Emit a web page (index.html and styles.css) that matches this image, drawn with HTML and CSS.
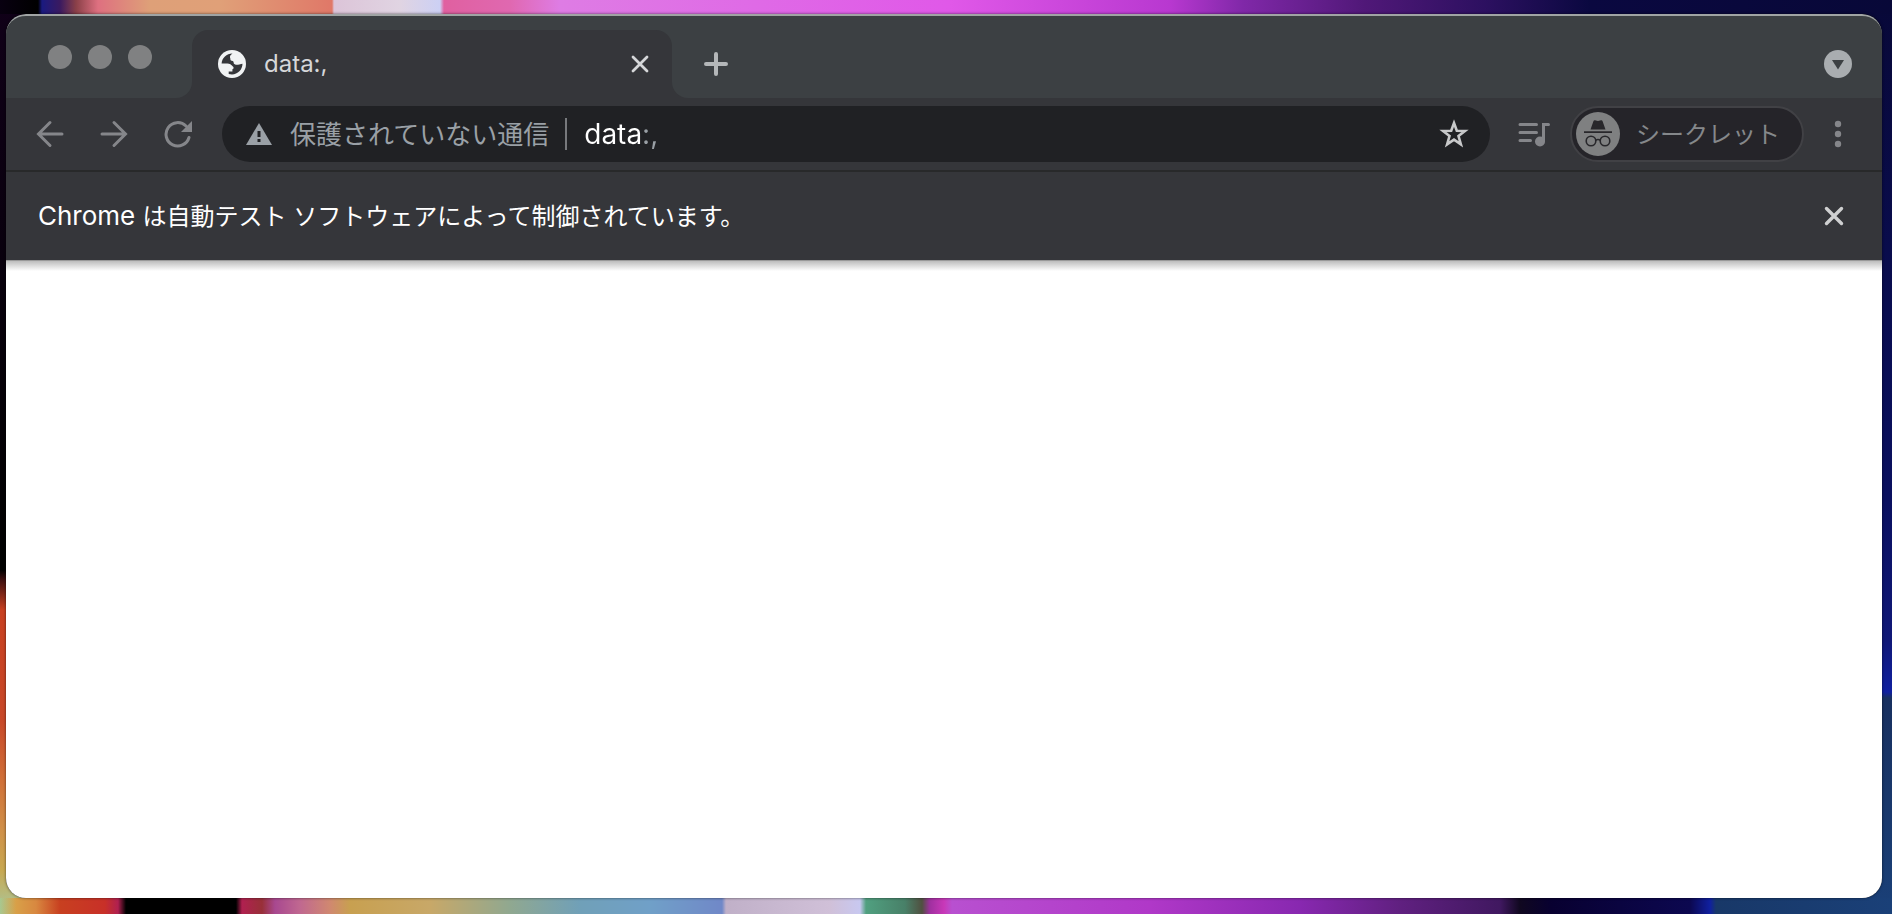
FILE: index.html
```html
<!DOCTYPE html>
<html lang="ja">
<head>
<meta charset="utf-8">
<title>data:,</title>
<link rel="stylesheet" href="styles.css">
</head>
<body>
<div class="window">
  <header class="tab-strip">
    <div class="window-controls">
      <button class="light" aria-label="閉じる"></button>
      <button class="light" aria-label="最小化"></button>
      <button class="light" aria-label="最大化"></button>
    </div>
    <div class="tab-slot">
      <div class="tab">
        <svg class="icon-28" viewBox="0 0 28 28" aria-hidden="true">
          <circle cx="14" cy="14" r="14" fill="#f1f3f4"/>
          <path fill="#35363a" d="M3.600 13.400C4 8 8.500 3.700 14.500 3.500C12 5 11.600 6.500 12.200 8C12.800 9.300 11.800 10.400 13.600 10.800C15.400 11.200 15.700 11.700 15.700 13C15.700 14.200 17.600 15 20 14.800C22.200 14.700 22.300 13.800 24.500 13.800C24.500 19.600 19.800 24.400 14 24.500C12.800 24.500 11.800 24.300 10.700 24L10.700 21.500L14.400 21.500L14.400 19.200C16 18.800 16 17.200 14.600 16.300C13.500 14.500 11.500 13.400 9.500 13.400Z"/>
        </svg>
        <span class="tab-title">data:,</span>
        <button class="icon-button" aria-label="タブを閉じる">
          <svg class="icon-28" viewBox="0 0 28 28"><path d="M7 7L21 21M21 7L7 21" stroke="#d6d7d9" stroke-width="2.800" stroke-linecap="round"/></svg>
        </button>
      </div>
    </div>
    <div class="strip-rest">
      <button class="icon-button" aria-label="新しいタブ">
        <svg class="icon-28" viewBox="0 0 28 28"><path d="M14 4V24M4 14H24" stroke="#b4b7b9" stroke-width="4" stroke-linecap="round"/></svg>
      </button>
      <button class="icon-button" aria-label="タブを検索">
        <svg class="icon-28" viewBox="0 0 28 28"><circle cx="14" cy="14" r="14" fill="#a9adb0"/><path d="M8 10H20L14 19.500Z" fill="#3c4043"/></svg>
      </button>
    </div>
  </header>

  <nav class="toolbar">
    <div class="nav-buttons">
      <button class="icon-button" aria-label="戻る">
        <svg class="icon-28" viewBox="0 0 28 28"><path d="M26 14H3M14 2.500L2.500 14L14 25.500" class="nav-stroke"/></svg>
      </button>
      <button class="icon-button" aria-label="進む">
        <svg class="icon-28" viewBox="0 0 28 28"><path d="M2 14H25M14 2.500L25.500 14L14 25.500" class="nav-stroke"/></svg>
      </button>
      <button class="icon-button" aria-label="再読み込み">
        <svg class="icon-28" viewBox="0 0 28 28"><path d="M22 6A11.700 11.700 0 1 0 25 17.500" class="nav-stroke"/><path d="M28 1V12H17Z" fill="#85868a"/></svg>
      </button>
    </div>
    <div class="omnibox">
      <button class="security">
        <svg class="warning" viewBox="0 0 26 22" aria-hidden="true"><path d="M13 0L26 22H0Z" fill="#9aa0a6"/><path d="M11.500 8H14.500V14H11.500ZM11.500 16H14.500V19H11.500Z" fill="#202124"/></svg>
        <span class="label">保護されていない通信</span>
      </button>
      <input class="address" type="text" value="data:," aria-label="アドレス検索バー">
      <button class="icon-button" aria-label="ブックマークに追加">
        <svg class="star" viewBox="0 0 30 30"><path d="M15 4L17.800 11.700L26 12L19.500 17L21.900 25.300L15 20.600L8.100 25.300L10.500 17L4 12L12.200 11.700Z" fill="none" stroke="#c8c9ca" stroke-width="2.600"/></svg>
      </button>
    </div>
    <button class="icon-button" aria-label="メディア">
      <svg class="media" viewBox="0 0 32 26"><path d="M2 3.500H18.500M2 11.500H18.500M2 19.500H12.500M25.500 20V3.500H30.500" fill="none" stroke="#85868a" stroke-width="3" stroke-linecap="round"/><circle cx="22" cy="20.500" r="5" fill="#85868a"/></svg>
    </button>
    <button class="profile">
      <svg class="avatar" viewBox="0 0 44 44" aria-hidden="true">
        <circle cx="22" cy="22" r="22" fill="#7f8081"/>
        <path d="M14.500 17.500L17.500 9Q18 8 19 8.300L22 9L25 8.300Q26 8 26.500 9L29.500 17.500Z" fill="#28272b"/>
        <path d="M8 20.200H36" stroke="#28272b" stroke-width="1.800"/>
        <g fill="none" stroke="#28272b" stroke-width="1.600"><circle cx="15" cy="29" r="4.800"/><circle cx="29" cy="29" r="4.800"/><path d="M19.500 28.500Q22 26.500 24.500 28.500"/></g>
      </svg>
      <span class="label">シークレット</span>
    </button>
    <button class="icon-button" aria-label="メニュー">
      <svg class="icon-28" viewBox="0 0 28 28" fill="#85868a"><circle cx="14" cy="4" r="3.200"/><circle cx="14" cy="14" r="3.200"/><circle cx="14" cy="24" r="3.200"/></svg>
    </button>
  </nav>

  <div class="infobar" role="status">
    <p class="message"><span class="product">Chrome </span>は自動テスト ソフトウェアによって制御されています。</p>
    <button class="icon-button" aria-label="閉じる">
      <svg class="icon-28" viewBox="0 0 28 28"><path d="M6.500 6.500L21.500 21.500M21.500 6.500L6.500 21.500" stroke="#cfd0d1" stroke-width="3.400" stroke-linecap="round"/></svg>
    </button>
  </div>
  <main class="page"></main>
</div>
</body>
</html>
```
FILE: styles.css
```css
* {
  box-sizing: border-box;
}

body {
  margin: 0;
  min-height: 100vh;
  padding: 14px 10px 16px 6px;
  display: flex;
  font-family: Inter, "Noto Sans CJK JP", sans-serif;
  font-size: 24px;
  background-color: #080838;
  background-repeat: no-repeat;
  background-position: 0 0, 0 100%, 0 0, 100% 0;
  background-size: 100% 14px, 100% 16px, 50% 100%, 50% 100%;
  background-image:
    linear-gradient(90deg, #080010 0, #000 38px, #1a1a80 42px, #3a1a60 60px, #8a4048 76px, #de7080 98px, #dea078 150px, #e0a078 220px, #e07868 332px, #dcc4d8 334px, #e0d4e2 400px, #ccd0f4 440px, #e060a0 444px, #e068b0 510px, #de7ce4 560px, #e058e8 950px, #b838d0 1170px, #8028a8 1243px, #501878 1365px, #2c1060 1486px, #0a0840 1590px, #080838 100%),
    linear-gradient(90deg, #a8c890 0, #d8a048 16px, #d88840 36px, #c84020 60px, #c83028 105px, #b02050 118px, #000 126px, #000 236px, #b02050 242px, #983038 262px, #a84890 275px, #c06890 300px, #d08870 330px, #c8a050 350px, #c8a868 430px, #90a890 510px, #70a0b8 580px, #70a0c8 650px, #7088c8 722px, #c0b0c8 726px, #d0c0d8 830px, #c8c8f0 860px, #50a080 866px, #488068 905px, #505040 922px, #a030a0 930px, #c838b8 944px, #b850d0 952px, #b038c8 1150px, #8828b0 1300px, #602080 1400px, #401860 1500px, #100820 1520px, #080030 1550px, #0c0850 1690px, #1020a0 1710px, #183868 1716px, #1a4078 100%),
    linear-gradient(180deg, #100018 0, #000 570px, #401010 580px, #c84020 610px, #c84828 720px, #d07038 780px, #d09048 830px, #c8a850 870px, #a8c8a0 100%),
    linear-gradient(180deg, #080838 0, #0a1060 500px, #101878 640px, #1020a0 692px, #183060 698px, #1a4078 100%);
}

button {
  border: 0;
  padding: 0;
  background: none;
  font: inherit;
}

svg {
  display: block;
}

.window {
  flex: 1;
  display: flex;
  flex-direction: column;
  overflow: hidden;
  border-radius: 20px;
  background: #35363a;
  box-shadow: 0 0 3px rgba(0, 0, 0, 0.6);
}

.tab-strip {
  display: flex;
  height: 84px;
}

.window-controls,
.tab-slot,
.strip-rest {
  background: #3c4043;
  border-top: 2px solid #a0a4a4;
}

.window-controls {
  width: 186px;
  display: flex;
  gap: 16px;
  padding: 29px 0 0 42px;
  border-top-left-radius: 20px;
  border-bottom-right-radius: 16px;
}

.light {
  width: 24px;
  height: 24px;
  border-radius: 50%;
  background: #808182;
}

.tab-slot {
  width: 480px;
  padding-top: 14px;
  background: linear-gradient(#3c4043 50%, #35363a 50%);
}

.tab {
  height: 68px;
  display: flex;
  align-items: center;
  gap: 18px;
  padding: 0 18px 0 26px;
  border-radius: 16px 16px 0 0;
  background: #35363a;
}

.tab-title {
  flex: 1;
  padding-bottom: 2px;
  color: #d6d7d9;
}

.icon-28 {
  width: 28px;
  height: 28px;
}

.strip-rest {
  flex: 1;
  display: flex;
  justify-content: space-between;
  align-items: center;
  padding: 14px 30px 0;
  border-top-right-radius: 20px;
  border-bottom-left-radius: 16px;
}

.toolbar {
  height: 74px;
  display: flex;
  align-items: center;
  padding: 0 30px;
  border-bottom: 2px solid #28292a;
}

.nav-buttons {
  display: flex;
  gap: 36px;
  margin-right: 30px;
}

.nav-stroke {
  fill: none;
  stroke: #85868a;
  stroke-width: 3;
  stroke-linecap: round;
}

.omnibox {
  flex: 1;
  height: 56px;
  display: flex;
  align-items: center;
  margin-right: 28px;
  padding: 0 21px 0 24px;
  border-radius: 28px;
  background: #202124;
}

.security {
  height: 32px;
  display: flex;
  align-items: center;
  gap: 18px;
  padding-right: 16px;
  border-right: 2px solid #77797c;
  font-size: 26px;
  color: #9aa0a6;
}

.label,
.message {
  padding-bottom: 3px;
}

.warning {
  width: 26px;
  height: 22px;
}

.address {
  flex: 1;
  min-width: 0;
  border: 0;
  outline: 0;
  padding: 0 0 0 17px;
  font: 28px Inter, sans-serif;
  color: transparent;
  background: linear-gradient(90deg, #fff 76px, #9aa0a6 76px);
  -webkit-background-clip: text;
  background-clip: text;
}

.star {
  width: 30px;
  height: 30px;
}

.media {
  width: 32px;
  height: 26px;
}

.profile {
  height: 56px;
  display: flex;
  align-items: center;
  gap: 16px;
  margin: 0 20px;
  padding: 0 22px 0 4px;
  border: 2px solid #414145;
  border-radius: 28px;
  background: #252429;
  color: #85888b;
}

.avatar {
  width: 44px;
  height: 44px;
}

.infobar {
  height: 88px;
  display: flex;
  align-items: center;
  justify-content: space-between;
  padding: 0 34px 0 32px;
}

.message {
  margin: 0;
  color: #fff;
}

.product {
  font-size: 26px;
}

.page {
  flex: 1;
  border-top: 1px solid #999;
  background: linear-gradient(#bdbdbd, #fff 10px);
}
```
